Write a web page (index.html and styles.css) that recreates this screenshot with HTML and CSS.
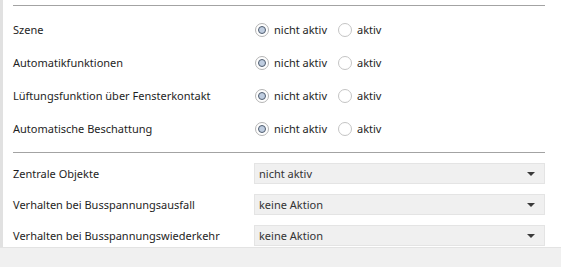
FILE: index.html
```html
<!DOCTYPE html>
<html lang="de">
<head>
<meta charset="utf-8">
<link rel="stylesheet" href="styles.css">
</head>
<body>
<div class="page">
  <div class="content">
    <div class="sep sep-top"></div>
    <div class="rows">
      <div class="row">
        <div class="label">Szene</div>
        <div class="control">
          <span class="radio checked"></span><span class="opt">nicht aktiv</span>
          <span class="radio"></span><span class="opt">aktiv</span>
        </div>
      </div>
      <div class="row">
        <div class="label">Automatikfunktionen</div>
        <div class="control">
          <span class="radio checked"></span><span class="opt">nicht aktiv</span>
          <span class="radio"></span><span class="opt">aktiv</span>
        </div>
      </div>
      <div class="row">
        <div class="label">Lüftungsfunktion über Fensterkontakt</div>
        <div class="control">
          <span class="radio checked"></span><span class="opt">nicht aktiv</span>
          <span class="radio"></span><span class="opt">aktiv</span>
        </div>
      </div>
      <div class="row">
        <div class="label">Automatische Beschattung</div>
        <div class="control">
          <span class="radio checked"></span><span class="opt">nicht aktiv</span>
          <span class="radio"></span><span class="opt">aktiv</span>
        </div>
      </div>
    </div>
    <div class="sep sep-mid"></div>
    <div class="selects">
      <div class="srow">
        <div class="label">Zentrale Objekte</div>
        <div class="select"><span>nicht aktiv</span><span class="arrow"></span></div>
      </div>
      <div class="srow">
        <div class="label">Verhalten bei Busspannungsausfall</div>
        <div class="select"><span>keine Aktion</span><span class="arrow"></span></div>
      </div>
      <div class="srow">
        <div class="label">Verhalten bei Busspannungswiederkehr</div>
        <div class="select"><span>keine Aktion</span><span class="arrow"></span></div>
      </div>
    </div>
  </div>
  <div class="footer"></div>
</div>
</body>
</html>
```

FILE: styles.css
```css
html, body {
  margin: 0;
  padding: 0;
  background: #ffffff;
}
body {
  font-family: "Noto Sans", "Open Sans", sans-serif;
  font-size: 11px;
  color: #1e1e1e;
}
.page {
  width: 561px;
  height: 267px;
  display: flex;
  flex-direction: column;
  overflow: hidden;
}
.content {
  flex: 1;
  border-left: 3px solid #e1e1e1;
  padding: 0 16px 0 10px;
  display: flex;
  flex-direction: column;
}
.sep {
  height: 1px;
  background: #a3a3a3;
}
.sep-top {
  margin-top: 5px;
}
.rows {
  padding-top: 7px;
}
.row {
  height: 33px;
  display: flex;
  align-items: center;
}
.label {
  width: 241px;
  flex: none;
  white-space: nowrap;
}
.control {
  display: flex;
  align-items: center;
}
.radio {
  width: 12px;
  height: 12px;
  border: 1px solid #c4c4c4;
  border-radius: 50%;
  background: #ffffff;
  margin-left: 1px;
  margin-right: 5px;
  display: flex;
  align-items: center;
  justify-content: center;
  box-sizing: content-box;
}
.radio.checked {
  border-color: #b4b4b4;
}
.radio.checked::after {
  content: "";
  width: 6px;
  height: 6px;
  border-radius: 50%;
  background: #bfcde0;
  border: 1px solid #4f5c6e;
}
.opt {
  margin-right: 10px;
}
.sep-mid {
  margin-top: 7px;
}
.selects {
  padding-top: 10px;
  display: flex;
  flex-direction: column;
  gap: 10px;
}
.srow {
  display: flex;
  align-items: center;
  height: 21px;
}
.select {
  flex: 1;
  height: 21px;
  box-sizing: border-box;
  background: #f0f0f0;
  border: 1px solid #e4e4e4;
  display: flex;
  align-items: center;
  justify-content: space-between;
  padding: 0 9px 0 4px;
  color: #333333;
}
.arrow {
  width: 0;
  height: 0;
  border-left: 4px solid transparent;
  border-right: 4px solid transparent;
  border-top: 4px solid #3a3a3a;
}
.footer {
  height: 20px;
  flex: none;
  background: #f0f0f0;
  border-top: 1px solid #e3e3e3;
  box-sizing: border-box;
}
```
